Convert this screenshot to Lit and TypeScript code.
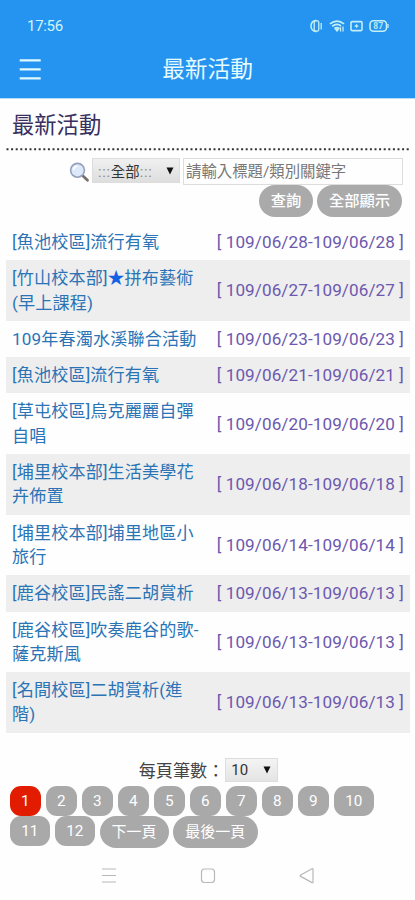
import { LitElement, html, css, svg } from "lit";
import { customElement } from "lit/decorators.js";
import { classMap } from "lit/directives/class-map.js";

interface Activity {
  title: string;
  star?: string;
  rest?: string;
  second?: string;
  date: string;
}

const ACTIVITIES: Activity[] = [
  { title: "[魚池校區]流行有氧", date: "109/06/28-109/06/28" },
  { title: "[竹山校本部]", star: "★", rest: "拼布藝術", second: "(早上課程)", date: "109/06/27-109/06/27" },
  { title: "109年春濁水溪聯合活動", date: "109/06/23-109/06/23" },
  { title: "[魚池校區]流行有氧", date: "109/06/21-109/06/21" },
  { title: "[草屯校區]烏克麗麗自彈", second: "自唱", date: "109/06/20-109/06/20" },
  { title: "[埔里校本部]生活美學花", second: "卉佈置", date: "109/06/18-109/06/18" },
  { title: "[埔里校本部]埔里地區小", second: "旅行", date: "109/06/14-109/06/14" },
  { title: "[鹿谷校區]民謠二胡賞析", date: "109/06/13-109/06/13" },
  { title: "[鹿谷校區]吹奏鹿谷的歌-", second: "薩克斯風", date: "109/06/13-109/06/13" },
  { title: "[名間校區]二胡賞析(進", second: "階)", date: "109/06/13-109/06/13" },
];

@customElement("app-header")
class AppHeader extends LitElement {
  static styles = css`
    :host { display: block; height: 99px; background: #2494f0; color: #e6fbff; border-bottom: 1px solid #b4dcf5; box-sizing: border-box; }
    .status { height: 40px; padding: 12px 25px 0 27px; box-sizing: border-box; display: flex; justify-content: space-between; align-items: center; font: 15px Roboto, sans-serif; }
    .time { color: #d3f4f8; letter-spacing: -0.3px; }
    .bar { height: 58px; display: grid; grid-template-columns: 60px 1fr 60px; align-items: center; }
    .menu { display: block; margin-left: 19px; }
    .title { text-align: center; padding-top: 2px; font: 22.7px/30px Roboto, "Noto Sans CJK TC", sans-serif; }
    svg { display: block; }
  `;
  render() {
    return html`
      <div class="status">
        <span class="time">17:56</span>
        <svg width="81" height="14" viewBox="0 0 81 14" fill="none" stroke="#c3eff5" stroke-width="1.3">
          <path d="M7.5 1.5h-1Q2 2.5 2 7t4.5 5.5h1" stroke-width="1.5" />
          <rect x="5.2" y="1.8" width="4.6" height="10.4" rx="1.6" />
          <path d="M12.2 4v6.5" />
          <path d="M21 4.8Q28 -0.6 35 4.8M23.2 7.3Q28 3.8 32 7M25.5 9.4Q28 7.8 30 9.2" stroke-width="1.7" />
          <path d="M28 12l-1.7-2h3.4zM31.5 12.5V8.2M34 7.5v5" />
          <rect x="42" y="2.6" width="11" height="9" rx="1" stroke-width="1.6" />
          <path d="M45.7 7h3.6M47.5 5.2v3.6" />
          <rect x="61" y="1.7" width="16.5" height="10.6" rx="3.5" stroke-width="1.6" />
          <path d="M79 5v4" />
          <text x="69.2" y="10" text-anchor="middle" font-family="Roboto" font-size="8.5" font-weight="700" fill="#b6e7f0" stroke="none">87</text>
        </svg>
      </div>
      <div class="bar">
        <svg class="menu" width="22" height="24" viewBox="0 0 22 24" stroke="#dffaff" stroke-width="2.2"><path d="M0.7 3.3h21M0.7 12.3h21M0.7 21.3h21" /></svg>
        <div class="title">最新活動</div>
      </div>`;
  }
}

@customElement("search-form")
class SearchForm extends LitElement {
  static styles = css`
    :host { display: block; height: 73px; padding-top: 7px; box-sizing: border-box; font-family: Roboto, "Noto Sans CJK TC", sans-serif; }
    .fields { display: flex; justify-content: flex-end; margin-right: 12px; height: 28px; }
    .glass { margin: 4px 2px 0 0; }
    .select { width: 88px; height: 25px; box-sizing: border-box; border: 1px solid #ddd; background: linear-gradient(#f0f0f0, #dedede); display: flex; align-items: center; justify-content: space-between; padding: 0 5px 0 5px; font-size: 14.4px; color: #333; white-space: pre; margin-right: 3px; }
    .dots { color: #888; letter-spacing: 0.8px; }
    .input { width: 220px; height: 27px; box-sizing: border-box; border: 1px solid #ddd; padding: 0 2px; font-size: 15.4px; line-height: 26px; color: #777; }
    .actions { display: flex; justify-content: flex-end; gap: 4px; margin-right: 13px; }
    .btn { height: 32px; margin-top: -1px; border-radius: 16px; background: #aaa; color: #fff; font-size: 15.3px; line-height: 33px; text-align: center; font-weight: 500; }
    .query { width: 54px; }
    .all { width: 85px; }
  `;
  render() {
    return html`
      <div class="fields">
        <svg class="glass" width="21" height="21" viewBox="0 0 21 21">
          <path d="M13.5 13.5l5 4.7" stroke="#77706e" stroke-width="2.8" stroke-linecap="round" />
          <circle cx="8.5" cy="8.3" r="6.9" fill="#dce9fa" stroke="#969fbc" stroke-width="1.6" />
          <path d="M4.5 7.8a4 4 0 0 1 4-3.5" stroke="#fff" stroke-width="1.6" fill="none" />
        </svg>
        <div class="select"><span><span class="dots">:::</span>全部<span class="dots">:::</span></span>
          <svg width="8" height="8" viewBox="0 0 8 8"><path d="M0.5 0.5h7l-3.5 7z" fill="#111" /></svg></div>
        <div class="input">請輸入標題/類別關鍵字</div>
      </div>
      <div class="actions"><div class="btn query">查詢</div><div class="btn all">全部顯示</div></div>`;
  }
}

@customElement("activity-list")
class ActivityList extends LitElement {
  static styles = css`
    :host { display: block; margin: 0 5px 0 6px; font-family: Roboto, "Noto Sans CJK TC", sans-serif; font-size: 17.1px; line-height: 24.3px; }
    .row { display: flex; justify-content: space-between; align-items: center; padding: 6px 6px 6px 6px; }
    .shade { background: #eee; }
    .name { color: #2a74b6; white-space: nowrap; letter-spacing: 0.15px; }
    .line { display: block; height: 24.3px; }
    .star { color: #1262e6; display: inline-block; width: 17px; text-align: center; }
    .date { color: #6c58ae; white-space: nowrap; letter-spacing: 0.1px; }
  `;
  render() {
    return ACTIVITIES.map(
      (a, i) => html`<div class=${classMap({ row: true, shade: i % 2 === 1 })}>
        <div class="name"><span class="line">${a.title}${a.star ? html`<span class="star">${a.star}</span>` : ""}${a.rest ?? ""}</span>${a.second ? html`<span class="line">${a.second}</span>` : ""}</div>
        <div class="date">[ ${a.date} ]</div>
      </div>`
    );
  }
}

@customElement("page-picker")
class PagePicker extends LitElement {
  static styles = css`
    :host { display: block; padding-top: 25px; font-family: Roboto, "Noto Sans CJK TC", sans-serif; }
    .size { display: flex; justify-content: center; align-items: center; height: 24px; font-size: 17.1px; color: #444; padding-left: 2px; }
    .select { width: 53px; height: 24px; box-sizing: border-box; border: 1px solid #ddd; background: linear-gradient(#f4f4f4, #e4e4e4); display: flex; align-items: center; justify-content: space-between; padding: 0 6px 0 5px; font-size: 15px; color: #333; margin-left: 1px; }
    .pages { display: flex; gap: 4.5px; padding-left: 9.5px; align-items: flex-start; }
    .first { margin-top: 4px; }
    .pg { height: 30px; width: 31.5px; border-radius: 11px; background: #a9a9a9; color: #fff; font-size: 15.3px; line-height: 30px; text-align: center; }
    .wide { width: 40.5px; }
    .on { background: #e11c00; }
    .next, .last { height: 32px; border-radius: 16px; line-height: 33px; font-size: 15px; }
    .next { width: 69px; }
    .last { width: 84.5px; }
  `;
  render() {
    return html`
      <div class="size"><span>每頁筆數：</span><div class="select">10
        <svg width="8" height="8" viewBox="0 0 8 8"><path d="M0.5 0.5h7l-3.5 7z" fill="#111" /></svg></div></div>
      <div class="pages first">
        ${[1, 2, 3, 4, 5, 6, 7, 8, 9, 10].map((n) => html`<div class=${classMap({ pg: true, on: n === 1, wide: n > 9 })}>${n}</div>`)}
      </div>
      <div class="pages">
        <div class="pg wide">11</div><div class="pg wide">12</div>
        <div class="pg next">下一頁</div><div class="pg last">最後一頁</div>
      </div>`;
  }
}

@customElement("app-root")
class AppRoot extends LitElement {
  static styles = css`
    :host { display: flex; flex-direction: column; width: 415px; height: 900px; background: #fefefe; overflow: hidden; }
    .heading { margin: 0; height: 49px; padding-left: 12px; box-sizing: border-box; font: 22.3px/53px Roboto, "Noto Sans CJK TC", sans-serif; color: #38305f; }
    .rule { display: block; margin-left: 6px; }
    .nav { margin-top: auto; height: 49px; display: flex; }
  `;
  render() {
    return html`
      <app-header></app-header>
      <h1 class="heading">最新活動</h1>
      <svg class="rule" width="404" height="3" viewBox="0 0 404 3">${svg`<path d="M0.5 1.2H404" stroke="#333" stroke-width="2" stroke-dasharray="2 2.6" />`}</svg>
      <search-form></search-form>
      <activity-list></activity-list>
      <page-picker></page-picker>
      <svg class="nav" width="415" height="49" viewBox="0 0 415 49" fill="none" stroke="#b8b8b8" stroke-width="1.2">
        <path d="M102 18h14M102 24.5h14M102 31h14" />
        <rect x="201.5" y="18" width="13" height="13.5" rx="3" />
        <path d="M313 18.2v13q0 1-1 .4l-11.3-6.2q-1-.7 0-1.4L312 17.8q1-.6 1 .4z" />
      </svg>`;
  }
}
